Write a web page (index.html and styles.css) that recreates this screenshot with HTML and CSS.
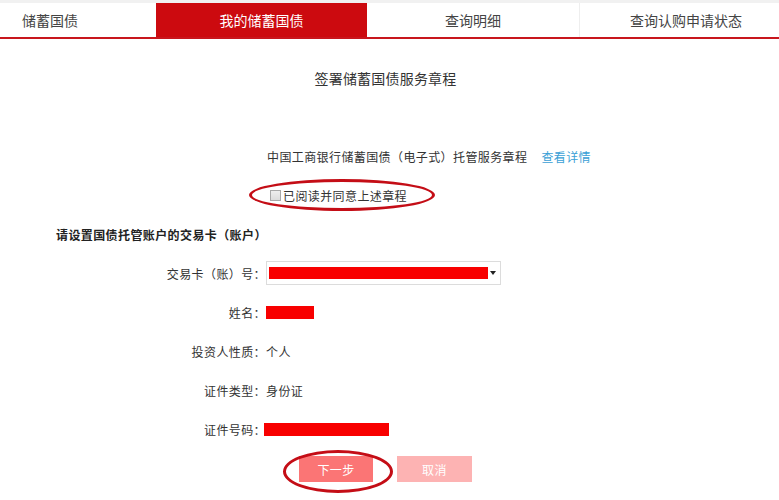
FILE: index.html
```html
<!DOCTYPE html>
<html lang="zh-CN">
<head>
<meta charset="utf-8">
<title>签署储蓄国债服务章程</title>
<link rel="stylesheet" href="styles.css">
</head>
<body>
<div class="page">
  <div class="topstrip"></div>
  <nav class="tabs">
    <div class="tab tab-first">储蓄国债</div>
    <div class="tab tab-active">我的储蓄国债</div>
    <div class="tab tab-third">查询明细</div>
    <div class="tab tab-last">查询认购申请状态</div>
  </nav>

  <h1 class="title">签署储蓄国债服务章程</h1>

  <div class="agreement">
    <span>中国工商银行储蓄国债（电子式）托管服务章程</span>
    <a class="link" href="#">查看详情</a>
  </div>
  <label class="agree">
    <span class="checkbox"></span>
    <span>已阅读并同意上述章程</span>
  </label>

  <h2 class="section">请设置国债托管账户的交易卡（账户）</h2>

  <div class="form">
    <div class="row">
      <div class="label">交易卡（账）号：</div>
      <div class="value">
        <div class="select">
          <span class="mask mask-card"></span>
          <span class="arrow"></span>
        </div>
      </div>
    </div>
    <div class="row">
      <div class="label">姓名：</div>
      <div class="value"><span class="mask mask-name"></span></div>
    </div>
    <div class="row">
      <div class="label">投资人性质：</div>
      <div class="value">个人</div>
    </div>
    <div class="row">
      <div class="label">证件类型：</div>
      <div class="value">身份证</div>
    </div>
    <div class="row">
      <div class="label">证件号码：</div>
      <div class="value"><span class="mask mask-id"></span></div>
    </div>
  </div>

  <div class="buttons">
    <button class="btn btn-next">下一步</button>
    <button class="btn btn-cancel">取消</button>
  </div>

  <div class="ring ring-agree"></div>
  <div class="ring ring-next"></div>
</div>
</body>
</html>
```

FILE: styles.css
```css
* { box-sizing: border-box; }
html, body {
  margin: 0;
  padding: 0;
  background: #fff;
}
body {
  font-family: "Noto Sans CJK SC", "Noto Sans", sans-serif;
  font-size: 12px;
  letter-spacing: 0.4px;
  color: #333;
}
.page {
  position: relative;
  width: 779px;
  height: 500px;
  overflow: hidden;
}
.topstrip {
  height: 3px;
  background: #f1f1f1;
}
.tabs {
  display: flex;
  height: 36px;
  border-bottom: 2px solid #c8161d;
}
.tab {
  height: 34px;
  line-height: 34px;
  font-size: 14px;
  letter-spacing: 0;
  color: #444;
  white-space: nowrap;
}
.tab-first {
  width: 156px;
  padding-left: 22px;
}
.tab-active {
  width: 211px;
  text-align: center;
  background: #cc0a0f;
  color: #fff;
}
.tab-third {
  width: 213px;
  text-align: center;
  border-right: 1px solid #eee;
}
.tab-last {
  flex: 1;
  padding-left: 50px;
}
.title {
  margin: 29px 0 0;
  padding-right: 8px;
  line-height: 20px;
  font-size: 14px;
  font-weight: normal;
  letter-spacing: 0.2px;
  text-align: center;
  color: #333;
}
.agreement {
  margin-top: 59px;
  padding-left: 267px;
  line-height: 20px;
  display: flex;
  gap: 14px;
}
.link {
  color: #3a9fd6;
  text-decoration: none;
}
.agree {
  margin-top: 18px;
  padding-left: 270px;
  height: 20px;
  display: flex;
  align-items: center;
  gap: 2px;
  font-size: 12px;
}
.checkbox {
  width: 11px;
  height: 11px;
  border: 1px solid #a8a8a8;
  background: linear-gradient(#eee, #dcdcdc);
}
.section {
  margin: 20px 0 0;
  padding-left: 56px;
  line-height: 20px;
  font-size: 12px;
  font-weight: bold;
  color: #222;
}
.form {
  margin-top: 16px;
  display: flex;
  flex-direction: column;
  gap: 15px;
}
.row {
  display: flex;
  align-items: center;
  height: 24px;
}
.label {
  width: 266px;
  text-align: right;
  white-space: nowrap;
}
.value {
  display: flex;
  align-items: center;
}
.select {
  width: 235px;
  height: 24px;
  border: 1px solid #dcdcdc;
  display: flex;
  align-items: center;
  padding-left: 2px;
}
.mask {
  display: block;
  background: #f80000;
}
.mask-card {
  width: 219px;
  height: 12px;
}
.arrow {
  margin-left: 2px;
  width: 0;
  height: 0;
  border-left: 3.5px solid transparent;
  border-right: 3.5px solid transparent;
  border-top: 4px solid #222;
}
.mask-name {
  width: 48px;
  height: 13px;
}
.mask-id {
  width: 125px;
  height: 13px;
  margin-left: -2px;
}
.buttons {
  margin-top: 15px;
  padding-left: 299px;
  display: flex;
  gap: 24px;
}
.btn {
  height: 26px;
  border: none;
  padding: 0;
  font-family: inherit;
  font-size: 12px;
  letter-spacing: 0.4px;
  color: #fff;
}
.btn-next {
  width: 74px;
  background: #fb7575;
}
.btn-cancel {
  width: 75px;
  background: #fdb3b3;
}
.ring {
  position: absolute;
  border: 3px solid #c40d16;
  border-radius: 50%;
}
.ring-agree {
  left: 249px;
  top: 179px;
  width: 186px;
  height: 32px;
}
.ring-next {
  left: 283px;
  top: 450px;
  width: 110px;
  height: 43px;
}
```
